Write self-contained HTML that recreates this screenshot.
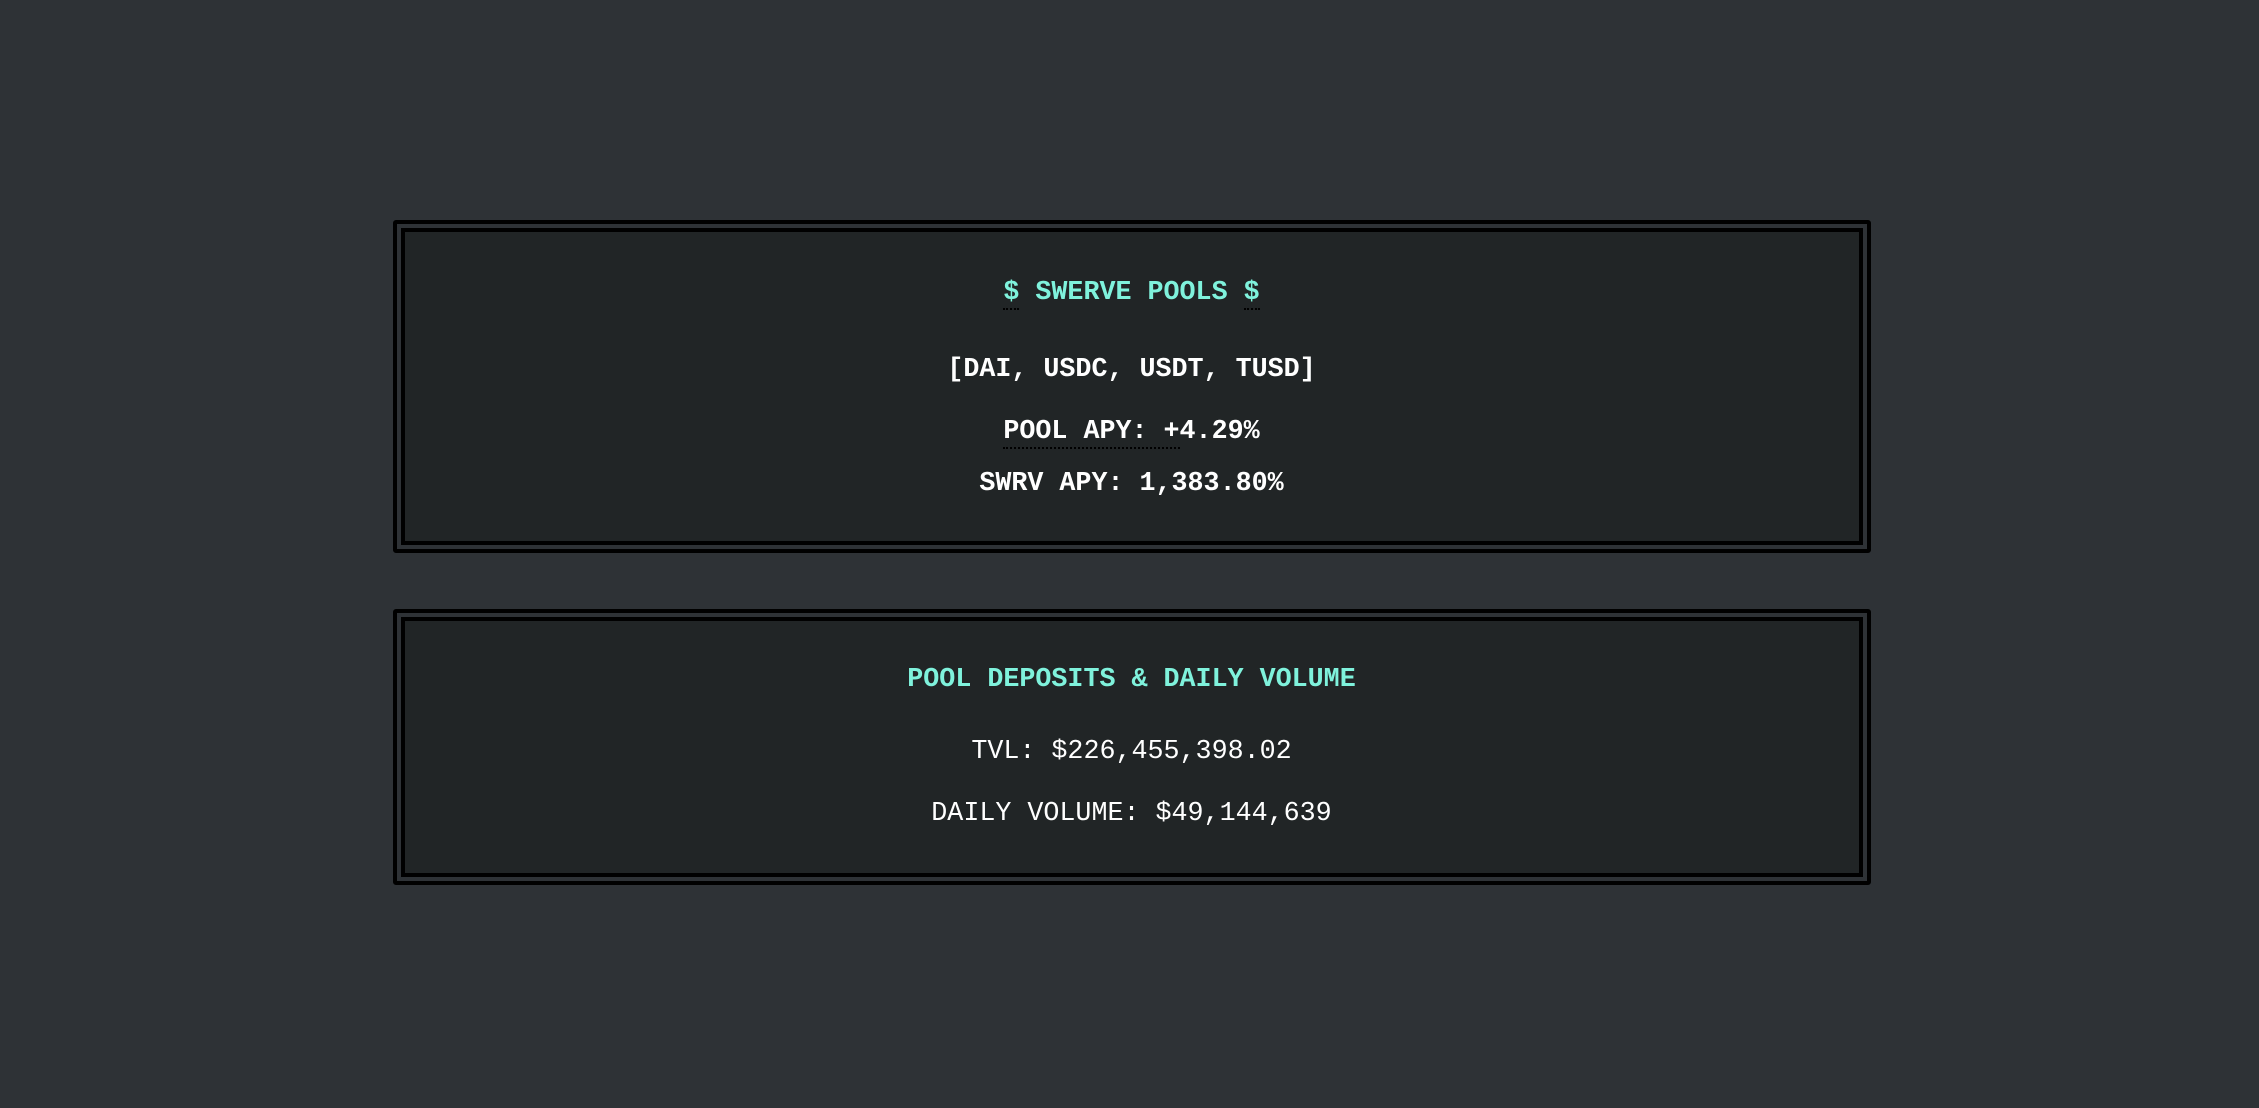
<!DOCTYPE html>
<html><head><meta charset="utf-8"><style>
html,body{margin:0;padding:0;width:2259px;height:1108px;background:#2e3236;overflow:hidden;font-family:"Liberation Mono",monospace;}
.box{position:absolute;left:393px;width:1478px;box-sizing:border-box;border:4px solid #000;border-radius:3px;padding:4px;}
.inner{width:100%;height:100%;box-sizing:border-box;border:4px solid #000;background:#212526;}
.t{position:absolute;left:392px;width:1479px;text-align:center;font-size:26.7px;line-height:32px;color:#fff;white-space:pre;}
.b{font-weight:bold}
.teal{color:#7ff2dc}
.u{border-bottom:2px dotted #000;}
</style></head><body>
<div class="box" style="top:220px;height:333px"><div class="inner"></div></div>
<div class="box" style="top:609px;height:276px"><div class="inner"></div></div>

<div class="t b teal" style="top:277px"><span class="u">$</span> SWERVE POOLS <span class="u">$</span></div>
<div class="t b" style="top:354px">[DAI, USDC, USDT, TUSD]</div>
<div class="t b" style="top:416px"><span class="u">POOL APY: +</span>4.29%</div>
<div class="t b" style="top:468px">SWRV APY: 1,383.80%</div>

<div class="t b teal" style="top:664px">POOL DEPOSITS &amp; DAILY VOLUME</div>
<div class="t" style="top:736px">TVL: $226,455,398.02</div>
<div class="t" style="top:798px">DAILY VOLUME: $49,144,639</div>
</body></html>
